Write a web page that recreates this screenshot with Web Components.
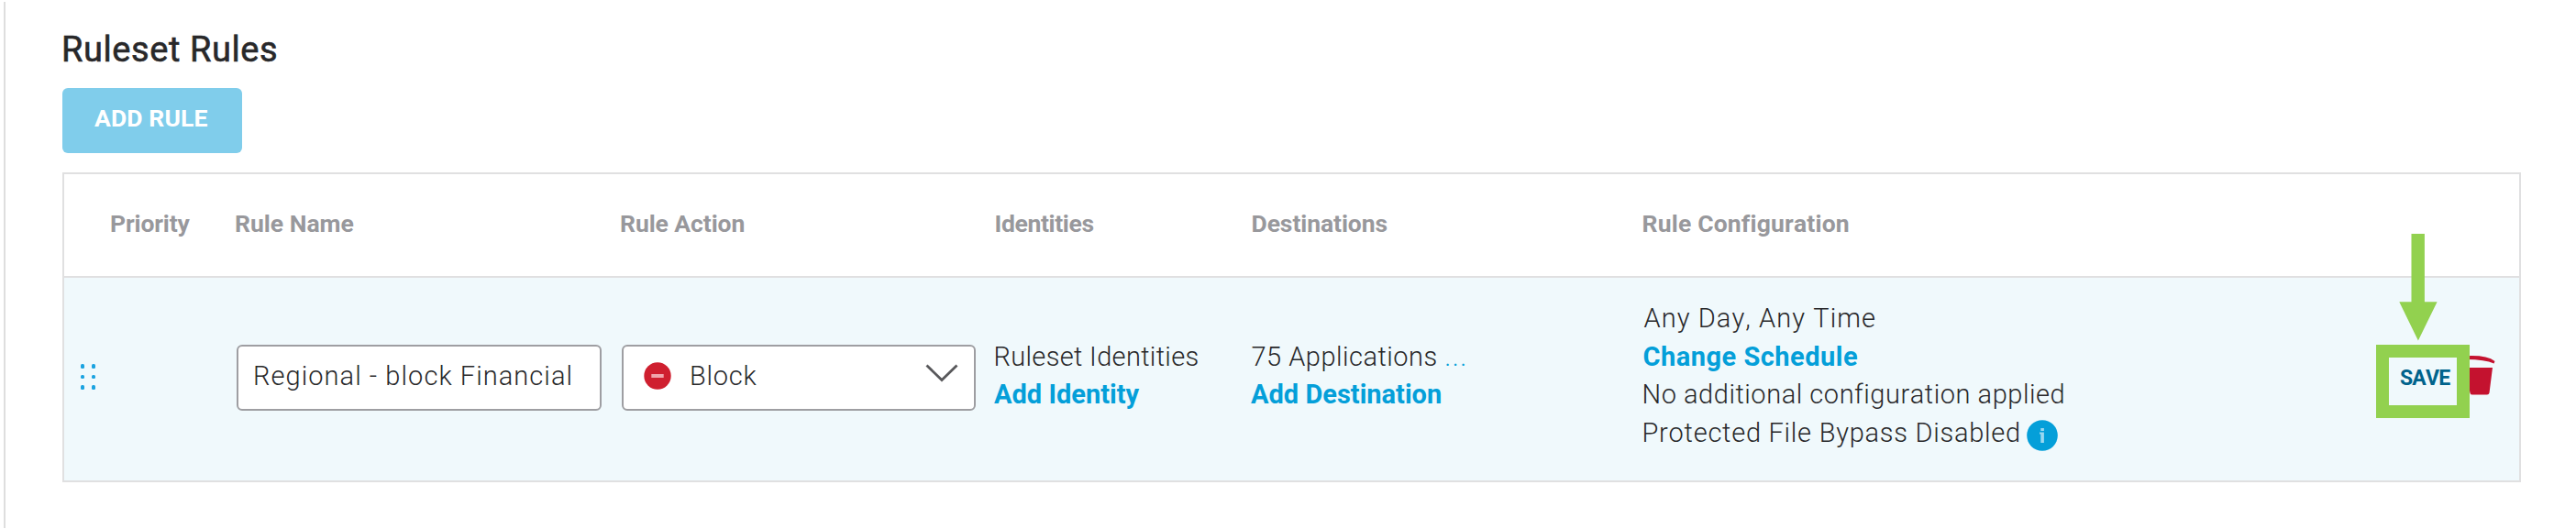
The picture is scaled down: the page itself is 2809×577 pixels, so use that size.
<!DOCTYPE html>
<html lang="en"><head><meta charset="utf-8"><title>Ruleset Rules</title>
<style>html,body{margin:0;background:#fff}body{font-family:Roboto,"Liberation Sans",sans-serif;color:#28282a}</style></head>
<body><ruleset-panel></ruleset-panel>
<script>
const define=(name,html,init)=>customElements.define(name,class extends HTMLElement{
  constructor(){super();this.attachShadow({mode:'open'}).innerHTML=html}
  connectedCallback(){init&&init.call(this)}
});

/* Single line of text, tracked so that its ink spans exactly `span` pixels. */
const pen=document.createElement('canvas').getContext('2d');
define('ui-label',`<style>:host{display:block;white-space:pre;font-size:var(--size,29px);line-height:41.67px;font-kerning:none;font-variant-ligatures:none}</style><slot></slot>`,function(){
  const cs=getComputedStyle(this),text=this.textContent;
  pen.font=`${cs.fontWeight} ${cs.fontSize} ${cs.fontFamily}`;pen.fontKerning='none';
  const m=pen.measureText(text),ink=m.actualBoundingBoxRight+m.actualBoundingBoxLeft;
  const track=(this.getAttribute('span')-ink)/(text.length-1);
  this.style.letterSpacing=track.toFixed(3)+'px';
  this.style.marginLeft=m.actualBoundingBoxLeft.toFixed(2)+'px';
  this.style.marginRight=(-track-4).toFixed(2)+'px';
});

define('ui-button',`<style>:host{display:flex;box-sizing:border-box;width:196px;height:71px;padding:12px 0 0 35px;border-radius:6px;background:#80cdeb;color:#fff;font-weight:700;--size:26.5px}</style><slot></slot>`);

define('drag-handle',`<style>:host{display:grid;grid-template-columns:4.4px 4.4px;gap:7.2px;padding:0 0 2px 18px}i{width:4.4px;height:4.4px;border-radius:1.500px;background:#1ba3e0}</style><i></i><i></i><i></i><i></i><i></i><i></i>`);

define('ui-field',`<style>:host{display:flex;align-items:center;box-sizing:border-box;height:72px;border:2px solid #9e9ea2;border-radius:6px;background:#fff}</style><slot></slot>`);

define('block-icon',`<style>:host{display:block;width:30px;height:30px}svg{display:block}</style><svg width="30" height="30"><circle cx="15" cy="15" r="14.7" fill="#cf1f2f"/><rect x="8.3" y="13" width="13.4" height="4" fill="#f0a5ac"/></svg>`);
define('chevron-icon',`<style>:host{display:block;width:36px;height:20px}svg{display:block}</style><svg width="36" height="20"><path d="M1.5 1.5 18 17.5 34.5 1.5" fill="none" stroke="#58585b" stroke-width="2.8"/></svg>`);
define('info-icon',`<style>:host{display:block;width:34px;height:34px}svg{display:block}</style><svg width="34" height="34"><circle cx="17" cy="17" r="16.8" fill="#049fd9"/><path d="M14 13.500H18.900V25H15.300V15.500H14Z" fill="#9bd8f0"/><rect x="15.3" y="9" width="3.6" height="3" fill="#9bd8f0"/></svg>`);
define('trash-icon',`<style>:host{display:block;width:40px;height:46px}svg{display:block}</style><svg width="40" height="46"><path d="M4 2.500Q30 .5 39.500 8L38.500 10.500Q28 5.500 4 6ZM7 15H37L33.500 42.500Q33 44.500 31 44.500H15Q13 44.500 12.600 43Z" fill="#c4122f"/></svg>`);

define('rule-row',`<style>:host{display:grid;grid-template-columns:187px 420px 408.500px 280px 426px 799px 1fr;align-items:center}</style><slot></slot>`);
define('rule-cell',`<style>:host{display:block;min-width:0}</style><slot></slot>`);

define('save-callout',`<style>
:host{display:block;position:relative;box-sizing:border-box;width:102.400px;height:80.200px;border:14px solid #92d14f}
.label{padding:0 0 0 12.400px;margin-top:2px;color:#00638c;font-weight:700;--size:23px}
svg{position:absolute;left:11.700px;top:-135px}</style>
<svg width="42" height="117"><path d="M13.500 0H27.900V74.300H41.600L20.900 116.500.3 74.300H13.500Z" fill="#92d14f"/></svg>
<div class="label"><ui-label span="55.300">SAVE</ui-label></div>`);

define('ruleset-panel',`<style>
:host{display:flex;box-sizing:border-box;height:577px;padding:2px 60px 0 4px}
.rail{width:1.500px;height:574px;background:#dedede;flex:none}
main{margin-left:62.500px;width:2681px}
h1{margin:0;padding:32px 0 0 2px;font-weight:400;font-size:inherit;--size:38px;color:#28282a;-webkit-text-stroke:.6px #28282a}
ui-button{margin-top:20.300px}
.table{box-sizing:border-box;margin-top:21px;width:2681px;height:338px;border:2px solid #e0e0e1}
.head{height:109px;padding-bottom:2px;border-bottom:2px solid #e0e0e1;color:#98989c;font-weight:700;--size:26.500px;box-sizing:content-box}
.head rule-cell:first-child{padding-left:51px}.head ui-label{margin-top:-1px}
.body{height:221px;background:#f0f9fc;font-weight:300}
.body rule-cell{padding-bottom:3px}
.body .stack{padding:0 0 6px 0}
.link{display:block;margin-left:-1.500px;color:#049fd9;font-weight:700}
.dots{color:#049fd9}.inline{display:flex}
ui-field.name{width:398px;padding-left:18px;margin-left:1px}
ui-field ui-label{margin-top:-2px}
ui-field.action{width:386px;padding:0 17px 0 22.500px;margin-left:.5px}
ui-field.action ui-label{margin-right:auto!important;padding-left:22px}
block-icon{margin-top:-4px}
chevron-icon{margin:-9px 0 0 auto}
.icons{display:flex;align-items:center;margin-top:8px}
save-callout{z-index:1}trash-icon{margin:-14px 0 0 -12px}
info-icon{margin:6px 0 0 10.500px}
</style>
<div class="rail"></div><main>
<h1><ui-label span="231">Ruleset Rules</ui-label></h1>
<ui-button><ui-label span="123.500">ADD RULE</ui-label></ui-button>
<div class="table">
<rule-row class="head">
<rule-cell><ui-label span="86.500">Priority</ui-label></rule-cell>
<rule-cell><ui-label span="128.500">Rule Name</ui-label></rule-cell>
<rule-cell><ui-label span="134.500">Rule Action</ui-label></rule-cell>
<rule-cell><ui-label span="107">Identities</ui-label></rule-cell>
<rule-cell><ui-label span="147">Destinations</ui-label></rule-cell>
<rule-cell><ui-label span="224">Rule Configuration</ui-label></rule-cell>
<rule-cell></rule-cell>
</rule-row>
<rule-row class="body">
<rule-cell><drag-handle></drag-handle></rule-cell>
<rule-cell><ui-field class="name"><ui-label span="344.500">Regional - block Financial</ui-label></ui-field></rule-cell>
<rule-cell><ui-field class="action"><block-icon></block-icon><ui-label span="71.500">Block</ui-label><chevron-icon></chevron-icon></ui-field></rule-cell>
<rule-cell class="stack"><ui-label span="221">Ruleset Identities</ui-label><span class="link"><ui-label span="158.500">Add Identity</ui-label></span></rule-cell>
<rule-cell class="stack"><div class="inline"><ui-label span="201">75 Applications</ui-label><ui-label class="dots" span="20" style="padding-left:14px">...</ui-label></div><span class="link"><ui-label span="207">Add Destination</ui-label></span></rule-cell>
<rule-cell class="stack" style="padding-left:1px"><ui-label span="251.500">Any Day, Any Time</ui-label><span class="link" style="margin-left:0"><ui-label span="232.500">Change Schedule</ui-label></span><ui-label span="456.500">No additional configuration applied</ui-label><div class="inline" style="height:41.670px"><ui-label span="408.500">Protected File Bypass Disabled</ui-label><info-icon></info-icon></div></rule-cell>
<rule-cell><div class="icons"><save-callout></save-callout><trash-icon></trash-icon></div></rule-cell>
</rule-row></div></main>`);
</script></body></html>
